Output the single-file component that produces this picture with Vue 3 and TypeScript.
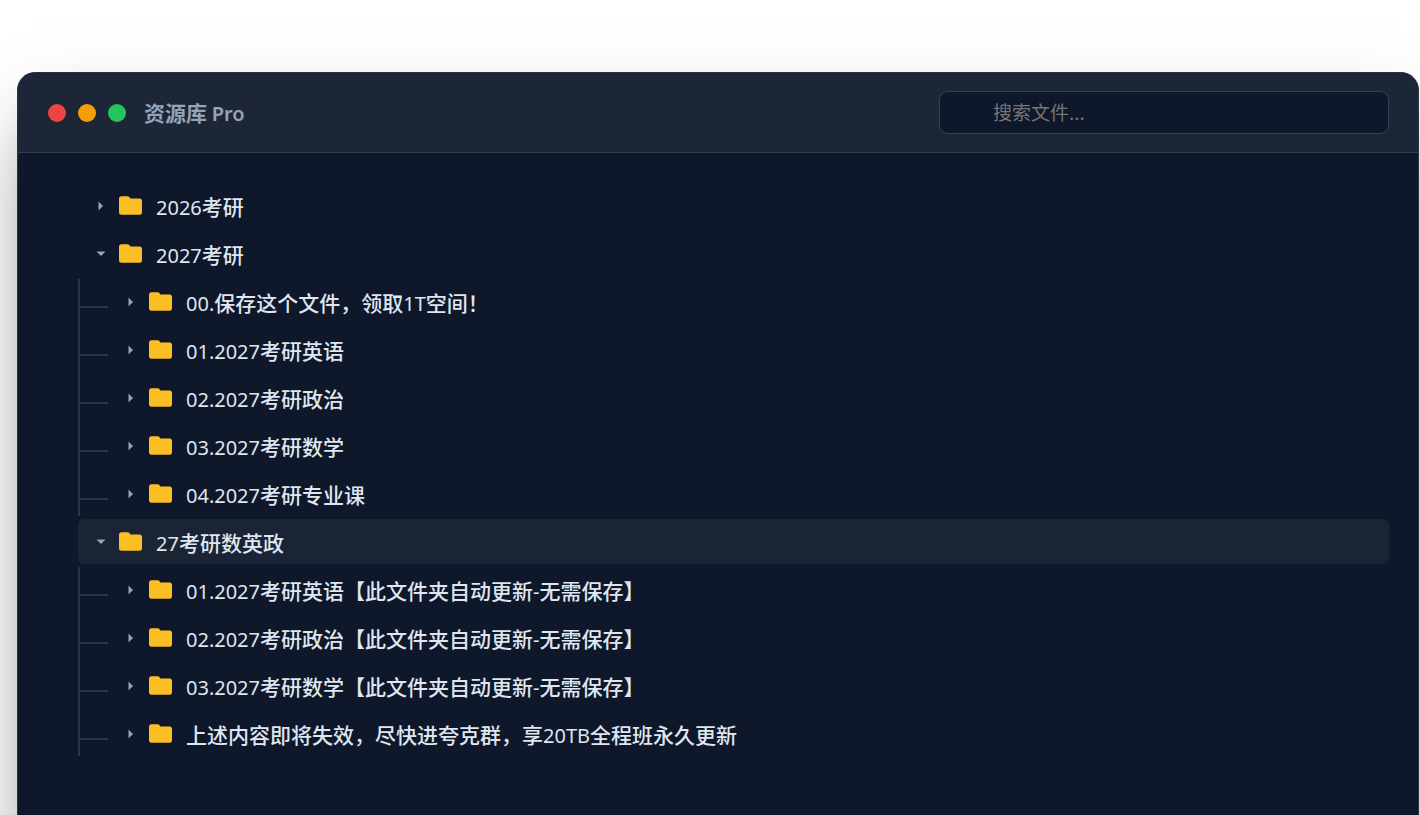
<script setup lang="ts">
import { ref } from 'vue'

interface Folder {
  name: string
  open?: boolean
  children?: Folder[]
}

const query = ref('')
const active = ref('27考研数英政')

const folders = ref<Folder[]>([
  { name: '2026考研' },
  {
    name: '2027考研',
    open: true,
    children: [
      { name: '00.保存这个文件，领取1T空间！' },
      { name: '01.2027考研英语' },
      { name: '02.2027考研政治' },
      { name: '03.2027考研数学' },
      { name: '04.2027考研专业课' },
    ],
  },
  {
    name: '27考研数英政',
    open: true,
    children: [
      { name: '01.2027考研英语【此文件夹自动更新-无需保存】' },
      { name: '02.2027考研政治【此文件夹自动更新-无需保存】' },
      { name: '03.2027考研数学【此文件夹自动更新-无需保存】' },
      { name: '上述内容即将失效，尽快进夸克群，享20TB全程班永久更新' },
    ],
  },
])

// Splits a name into alternating Latin and Chinese runs.
function runs(name: string): { text: string; latin: boolean }[] {
  const parts = name.match(/[ -~]+|[^ -~]+/g) ?? []
  return parts.map((text) => ({ text, latin: /^[ -~]/.test(text) }))
}

function toggle(folder: Folder) {
  folder.open = !folder.open
  active.value = folder.name
}
</script>

<template>
  <main class="page">
    <section class="window">
      <header class="bar">
        <div class="dots">
          <span class="dot red"></span>
          <span class="dot amber"></span>
          <span class="dot green"></span>
        </div>
        <h1 class="title">资源库 <span class="latin">Pro</span></h1>
        <input v-model="query" class="search" type="text" placeholder="搜索文件..." aria-label="搜索文件" />
      </header>
      <ul class="tree">
        <li v-for="folder in folders" :key="folder.name">
          <button class="row" :class="{ active: folder.name === active }" type="button" @click="toggle(folder)">
            <svg class="caret" :class="{ open: folder.open }" viewBox="0 0 18 18" aria-hidden="true">
              <path d="M6.5 4.5 11 9 6.5 13.5Z" />
            </svg>
            <svg class="folder" viewBox="0 0 24 24" aria-hidden="true">
              <path d="M2.5 2.3h6.2q1 0 1.6.7l1.2 1.6h9q2.5 0 2.5 2.5v11.2q0 2.5-2.5 2.5h-18Q0 20.8 0 18.3V4.8Q0 2.3 2.5 2.3Z" />
            </svg>
            <span class="name"><span v-for="(run, i) in runs(folder.name)" :key="i" :class="{ latin: run.latin }">{{ run.text }}</span></span>
          </button>
          <ul v-if="folder.open && folder.children" class="branch">
            <li v-for="child in folder.children" :key="child.name" class="leaf">
              <button class="row" :class="{ active: child.name === active }" type="button" @click="toggle(child)">
                <svg class="caret" :class="{ open: child.open }" viewBox="0 0 18 18" aria-hidden="true">
                  <path d="M6.5 4.5 11 9 6.5 13.5Z" />
                </svg>
                <svg class="folder" viewBox="0 0 24 24" aria-hidden="true">
                  <path d="M2.5 2.3h6.2q1 0 1.6.7l1.2 1.6h9q2.5 0 2.5 2.5v11.2q0 2.5-2.5 2.5h-18Q0 20.8 0 18.3V4.8Q0 2.3 2.5 2.3Z" />
                </svg>
                <span class="name"><span v-for="(run, i) in runs(child.name)" :key="i" :class="{ latin: run.latin }">{{ run.text }}</span></span>
              </button>
            </li>
          </ul>
        </li>
      </ul>
    </section>
  </main>
</template>

<style>
body {
  margin: 0;
  background: #fff;
}
</style>

<style scoped>
.page {
  box-sizing: border-box;
  display: flex;
  height: 100vh;
  padding: 72px 1px 0 17px;
  overflow: hidden;
  font-family: "Noto Sans CJK SC", "Noto Sans", sans-serif;
}

.window {
  box-sizing: border-box;
  flex: 1;
  min-height: 120vh;
  border: 1px solid #273447;
  border-radius: 18px;
  background: #0f172a;
  box-shadow: 0 38px 76px -18px rgba(0, 0, 0, 0.5);
  overflow: hidden;
}

.bar {
  box-sizing: border-box;
  display: flex;
  align-items: center;
  height: 80px;
  padding: 0 29px 0 30px;
  border-bottom: 1px solid #334155;
  background: #1c2636;
}

.dots {
  display: flex;
  gap: 12px;
}

.dot {
  width: 18px;
  height: 18px;
  border-radius: 50%;
}

.red {
  background: #ef4444;
}

.amber {
  background: #f59e0b;
}

.green {
  background: #22c55e;
}

.title {
  flex: 1;
  margin: 0 0 0 18px;
  padding-top: 1px;
  color: #94a3b8;
  font-size: 21px;
  font-weight: 600;
  line-height: 30px;
}

.latin {
  font-family: "Noto Sans", "Open Sans", sans-serif;
  font-size: 20px;
}

.search {
  box-sizing: border-box;
  width: 450px;
  height: 43px;
  padding: 0 18px 2px 53px;
  border: 1px solid #334155;
  border-radius: 9px;
  outline: none;
  background: #0f172a;
  color: #e2e8f0;
  font-family: inherit;
  font-size: 19px;
}

.search::placeholder {
  color: #757575;
}

.tree,
.branch {
  margin: 0;
  padding: 0;
  list-style: none;
}

.tree {
  padding: 30px 29px 30px 60px;
}

.branch {
  position: relative;
  padding-left: 30px;
}

.branch::before {
  position: absolute;
  top: 0;
  bottom: 0;
  left: 0;
  width: 2px;
  background: #2c3547;
  content: "";
}

.leaf {
  position: relative;
}

.leaf::before {
  position: absolute;
  top: 27px;
  left: -28px;
  width: 28px;
  height: 2px;
  background: #2c3547;
  content: "";
}

.row {
  box-sizing: border-box;
  display: flex;
  align-items: center;
  width: 100%;
  height: 45px;
  margin: 0 0 3px;
  padding: 0 14px;
  border: 0;
  border-radius: 6px;
  background: transparent;
  color: #dfe6ef;
  font-family: inherit;
  font-size: 21px;
  font-weight: 500;
  line-height: 30px;
  text-align: left;
  cursor: pointer;
}

.row.active {
  background: #1a2434;
}

.row .latin {
  font-weight: 400;
}

.caret {
  width: 18px;
  height: 18px;
  margin-right: 9px;
  fill: #94a3b8;
}

.caret.open {
  transform: rotate(90deg);
}

.folder {
  width: 24px;
  height: 24px;
  margin-right: 13px;
  fill: #fbbf24;
}

.name {
  padding-top: 3px;
  white-space: nowrap;
}
</style>
